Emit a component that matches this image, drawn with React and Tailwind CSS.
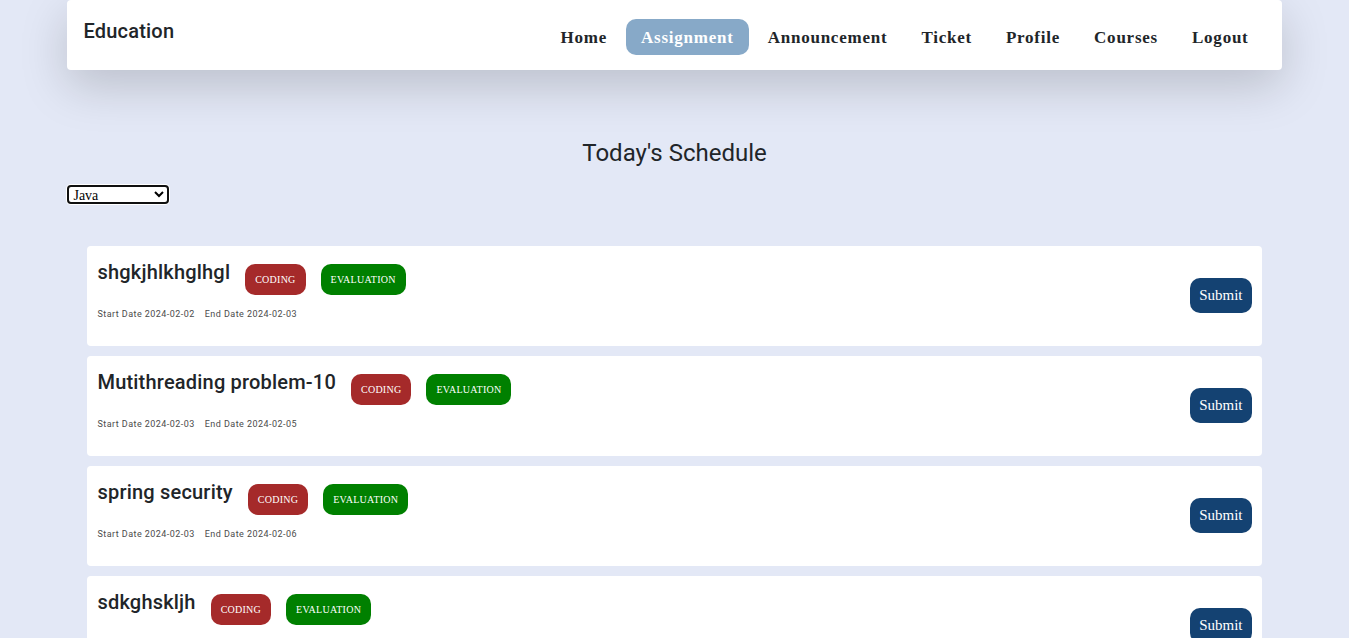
import { useState } from "react";

const links = ["Home", "Assignment", "Announcement", "Ticket", "Profile", "Courses", "Logout"];

const assignments = [
  { title: "shgkjhlkhglhgl", start: "2024-02-02", end: "2024-02-03" },
  { title: "Mutithreading problem-10", start: "2024-02-03", end: "2024-02-05" },
  { title: "spring security", start: "2024-02-03", end: "2024-02-06" },
  { title: "sdkghskljh", start: "2024-02-03", end: "2024-02-06" },
];

function Header() {
  return (
    <header className="flex h-[70px] items-start justify-between rounded bg-white pr-[18px] pl-4 shadow-[0_16px_48px_rgba(0,0,0,0.175)]">
      <h1 className="pt-[15px] font-[Roboto,sans-serif] text-xl leading-8 font-medium tracking-[0.01em]">Education</h1>
      <nav className="flex gap-1 pt-[19px]">
        {links.map((name) => (
          <a
            key={name}
            href={"#" + name.toLowerCase()}
            aria-current={name === "Assignment" ? "page" : undefined}
            className={
              name === "Assignment"
                ? "rounded-[10px] bg-[#87a9c8] px-[15px] pt-[2px] text-[17px] leading-[34px] font-bold tracking-[0.045em] text-white"
                : "rounded-[10px] px-[15px] pt-[2px] text-[17px] leading-[34px] font-bold tracking-[0.045em]"
            }
          >
            {name}
          </a>
        ))}
      </nav>
    </header>
  );
}

function AssignmentCard({ title, start, end }) {
  return (
    <li className="flex h-[100px] items-center justify-between rounded bg-white px-[10px] pb-px">
      <div className="flex h-full flex-col pt-[10px]">
        <div className="flex gap-[15px]">
          <h3 className="font-[Roboto,sans-serif] text-xl leading-8 font-medium tracking-[0.01em]">{title}</h3>
          <span className="mt-2 rounded-[10px] bg-[#a52a2a] p-[10px] text-[10px] leading-[11px] tracking-wide text-white">CODING</span>
          <span className="mt-2 rounded-[10px] bg-[#008000] p-[10px] text-[10px] leading-[11px] tracking-wide text-white">EVALUATION</span>
        </div>
        <p className="flex gap-[10px] pt-[11px] font-[Roboto,sans-serif] text-[9px] leading-4 tracking-wider text-[#4b4b4b]">
          <span>Start Date {start}</span>
          <span>End Date {end}</span>
        </p>
      </div>
      <button type="button" className="rounded-[10px] bg-[#144272] px-[9px] py-[9px] text-[15px] leading-[17px] text-white">
        Submit
      </button>
    </li>
  );
}

export default function App() {
  const [course, setCourse] = useState("Java");
  return (
    <div className="min-h-screen bg-[#e3e8f6] font-['Liberation_Serif',serif] text-[#212529]">
      <div className="mx-auto w-[90%]">
        <Header />
        <main>
          <h2 className="pt-[67px] text-center font-[Roboto,sans-serif] text-2xl leading-8">Today's Schedule</h2>
          <div className="flex pt-4">
            <select
              aria-label="Course"
              value={course}
              onChange={(e) => setCourse(e.target.value)}
              className="h-[19px] w-[102px] rounded border-2 border-[#101010] bg-white text-sm leading-none text-black shadow-[0_0_0_1px_white] outline-none"
            >
              <option>Java</option>
              <option>JavaScript</option>
            </select>
          </div>
          <ul className="mx-5 mt-[42px] flex flex-col gap-[10px]">
            {assignments.map((item) => (
              <AssignmentCard key={item.title} {...item} />
            ))}
          </ul>
        </main>
      </div>
    </div>
  );
}
